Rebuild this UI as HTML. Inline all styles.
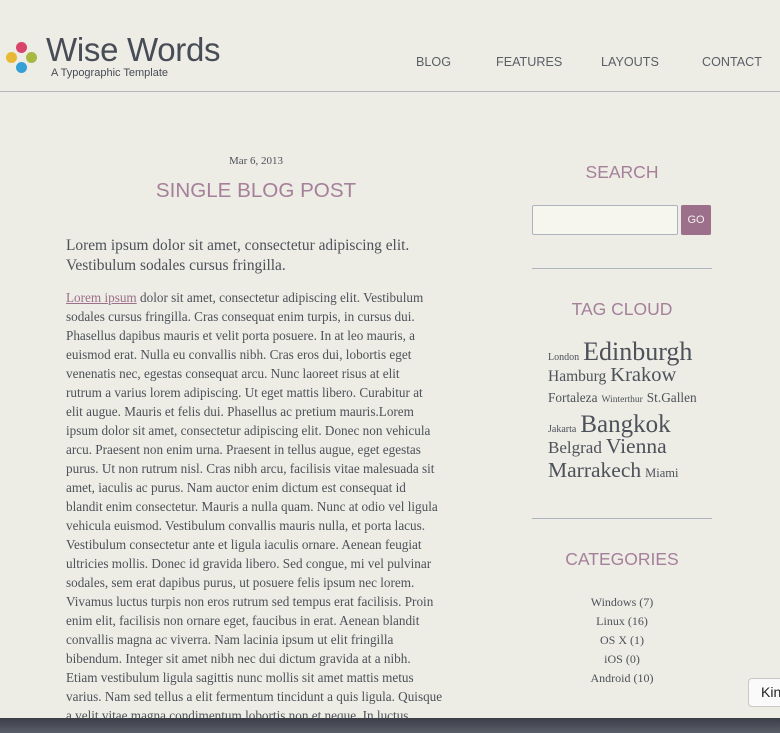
<!DOCTYPE html>
<html><head><meta charset="utf-8"><style>
*{margin:0;padding:0;box-sizing:border-box}
html,body{width:780px;height:733px;overflow:hidden;background:#edece5;font-family:"Liberation Serif",serif;color:#4d525a}
.abs{position:absolute}
.sans{font-family:"Liberation Sans",sans-serif}
.dot{position:absolute;width:11px;height:11px;border-radius:50%}
.nav{position:absolute;top:55px;font-size:12.6px;color:#5a5e66;font-family:"Liberation Sans",sans-serif}
.body p{white-space:nowrap;height:19px;font-size:13.2px;line-height:19px}
.h{position:absolute;left:532px;width:180px;text-align:center;color:#a5809a;font-family:"Liberation Sans",sans-serif;font-size:17.5px}
.hr{position:absolute;left:532px;width:180px;height:1px;background:#aeb3c0}
.tags{position:absolute;left:548px;top:338px;width:175px;line-height:1.1}
.tags span{white-space:nowrap}
.cat{position:absolute;left:532px;width:180px;text-align:center;font-size:12px}
</style></head><body>
<div class="dot" style="left:16px;top:42px;background:#d9456a"></div>
<div class="dot" style="left:6px;top:52px;background:#e8b935"></div>
<div class="dot" style="left:26px;top:52px;background:#a9b840"></div>
<div class="dot" style="left:16px;top:62px;background:#36a0d6"></div>
<div class="abs sans" style="left:46px;top:31px;font-size:33px;color:#474c56;letter-spacing:-0.3px">Wise Words</div>
<div class="abs sans" style="left:51px;top:67px;font-size:11px;color:#474c56">A Typographic Template</div>
<div class="nav" style="left:416px">BLOG</div>
<div class="nav" style="left:496px">FEATURES</div>
<div class="nav" style="left:601px">LAYOUTS</div>
<div class="nav" style="left:702px">CONTACT</div>
<div class="abs" style="left:0;top:91px;width:780px;height:1px;background:#b4b7be"></div>

<div class="abs" style="left:66px;width:380px;top:155px;text-align:center;font-size:11px">Mar 6, 2013</div>
<div class="abs sans" style="left:66px;width:380px;top:179px;text-align:center;font-size:20.6px;color:#a5809a">SINGLE BLOG POST</div>
<div class="abs" style="left:66px;top:236px;font-size:15.4px;line-height:20px;white-space:nowrap">Lorem ipsum dolor sit amet, consectetur adipiscing elit.<br>Vestibulum sodales cursus fringilla.</div>
<div class="abs body" style="left:66px;top:288px">
<p><span style="color:#9c6f8b;text-decoration:underline">Lorem ipsum</span> dolor sit amet, consectetur adipiscing elit. Vestibulum</p>
<p>sodales cursus fringilla. Cras consequat enim turpis, in cursus dui.</p>
<p>Phasellus dapibus mauris et velit porta posuere. In at leo mauris, a</p>
<p>euismod erat. Nulla eu convallis nibh. Cras eros dui, lobortis eget</p>
<p>venenatis nec, egestas consequat arcu. Nunc laoreet risus at elit</p>
<p>rutrum a varius lorem adipiscing. Ut eget mattis libero. Curabitur at</p>
<p>elit augue. Mauris et felis dui. Phasellus ac pretium mauris.Lorem</p>
<p>ipsum dolor sit amet, consectetur adipiscing elit. Donec non vehicula</p>
<p>arcu. Praesent non enim urna. Praesent in tellus augue, eget egestas</p>
<p>purus. Ut non rutrum nisl. Cras nibh arcu, facilisis vitae malesuada sit</p>
<p>amet, iaculis ac purus. Nam auctor enim dictum est consequat id</p>
<p>blandit enim consectetur. Mauris a nulla quam. Nunc at odio vel ligula</p>
<p>vehicula euismod. Vestibulum convallis mauris nulla, et porta lacus.</p>
<p>Vestibulum consectetur ante et ligula iaculis ornare. Aenean feugiat</p>
<p>ultricies mollis. Donec id gravida libero. Sed congue, mi vel pulvinar</p>
<p>sodales, sem erat dapibus purus, ut posuere felis ipsum nec lorem.</p>
<p>Vivamus luctus turpis non eros rutrum sed tempus erat facilisis. Proin</p>
<p>enim elit, facilisis non ornare eget, faucibus in erat. Aenean blandit</p>
<p>convallis magna ac viverra. Nam lacinia ipsum ut elit fringilla</p>
<p>bibendum. Integer sit amet nibh nec dui dictum gravida at a nibh.</p>
<p>Etiam vestibulum ligula sagittis nunc mollis sit amet mattis metus</p>
<p>varius. Nam sed tellus a elit fermentum tincidunt a quis ligula. Quisque</p>
<p>a velit vitae magna condimentum lobortis non et neque. In luctus</p>
</div>

<div class="h" style="top:162px">SEARCH</div>
<div class="abs" style="left:532px;top:205px;width:146px;height:30px;background:#f6f6ef;border:1px solid #aeb3c0;border-radius:2px"></div>
<div class="abs sans" style="left:681px;top:205px;width:30px;height:30px;background:#9c6f8b;border-radius:2px;color:#f3eef0;font-size:11px;line-height:30px;text-align:center">GO</div>
<div class="hr" style="top:268px"></div>
<div class="h" style="top:299px">TAG CLOUD</div>
<div class="tags">
<div style="height:26px"><span style="font-size:10px">London</span> <span style="font-size:26px">Edinburgh</span></div>
<div style="height:24px"><span style="font-size:15.5px">Hamburg</span> <span style="font-size:20.5px">Krakow</span></div>
<div style="height:22px;margin-top:1px"><span style="font-size:13.3px">Fortaleza</span> <span style="font-size:9.5px">Winterthur</span> <span style="font-size:13.3px">St.Gallen</span></div>
<div style="height:24px"><span style="font-size:10px">Jakarta</span> <span style="font-size:25px">Bangkok</span></div>
<div style="height:24px"><span style="font-size:17px">Belgrad</span> <span style="font-size:21.5px">Vienna</span></div>
<div><span style="font-size:21.5px">Marrakech</span> <span style="font-size:12.5px">Miami</span></div>
</div>
<div class="hr" style="top:518px"></div>
<div class="h" style="top:549px">CATEGORIES</div>
<div class="cat" style="top:595px">Windows (7)</div>
<div class="cat" style="top:614px">Linux (16)</div>
<div class="cat" style="top:633px">OS X (1)</div>
<div class="cat" style="top:652px">iOS (0)</div>
<div class="cat" style="top:671px">Android (10)</div>

<div class="abs sans" style="left:748px;top:678px;width:40px;height:29px;background:#fafafa;border:1px solid #c8c8c8;border-radius:4px;font-size:14px;line-height:27px;padding-left:12px;color:#222">Kin</div>
<div class="abs" style="left:0;top:718px;width:780px;height:15px;background:linear-gradient(#3c3f48,#5a5e6a)"></div>
</body></html>
